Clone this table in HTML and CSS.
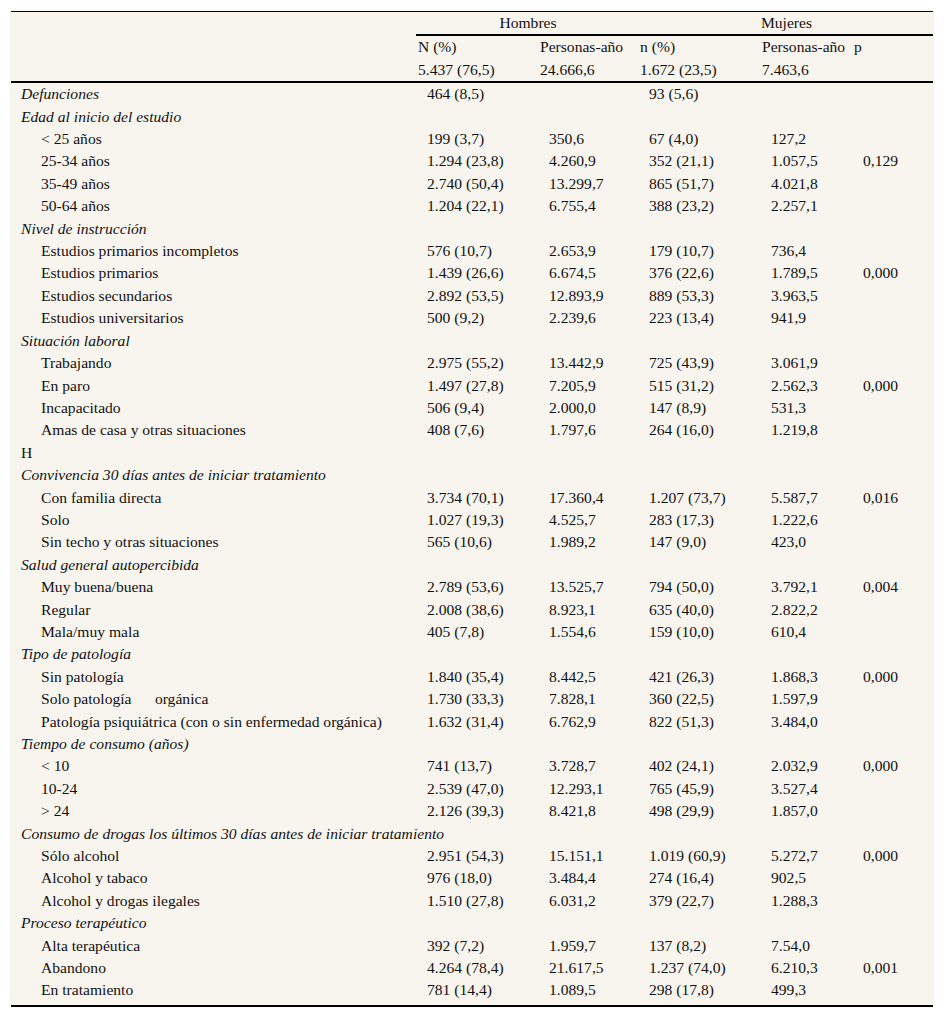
FILE: index.html
```html
<!DOCTYPE html>
<html lang="es">
<head>
<meta charset="utf-8">
<title>Tabla</title>
<link rel="stylesheet" href="styles.css">
</head>
<body>
<div class="wrap">
<div class="panel">
<table class="tbl">
<colgroup>
<col class="c1"><col class="c2"><col class="c3"><col class="c4"><col class="c5"><col class="c6">
</colgroup>
<thead>
<tr class="h1">
<th class="blank"></th>
<th class="grp" colspan="2">Hombres</th>
<th class="grp" colspan="3">Mujeres</th>
</tr>
<tr>
<th class="blank"></th>
<th>N (%)</th><th>Personas-año</th><th>n (%)</th><th>Personas-año</th><th>p</th>
</tr>
<tr class="h3">
<th class="blank"></th>
<th>5.437 (76,5)</th><th>24.666,6</th><th>1.672 (23,5)</th><th>7.463,6</th><th></th>
</tr>
</thead>
<tbody>
<tr><td class="cat">Defunciones</td><td>464 (8,5)</td><td></td><td>93 (5,6)</td><td></td><td></td></tr>
<tr><td class="cat">Edad al inicio del estudio</td><td></td><td></td><td></td><td></td><td></td></tr>
<tr><td class="sub">&lt; 25 años</td><td>199 (3,7)</td><td>350,6</td><td>67 (4,0)</td><td>127,2</td><td></td></tr>
<tr><td class="sub">25-34 años</td><td>1.294 (23,8)</td><td>4.260,9</td><td>352 (21,1)</td><td>1.057,5</td><td>0,129</td></tr>
<tr><td class="sub">35-49 años</td><td>2.740 (50,4)</td><td>13.299,7</td><td>865 (51,7)</td><td>4.021,8</td><td></td></tr>
<tr><td class="sub">50-64 años</td><td>1.204 (22,1)</td><td>6.755,4</td><td>388 (23,2)</td><td>2.257,1</td><td></td></tr>
<tr><td class="cat">Nivel de instrucción</td><td></td><td></td><td></td><td></td><td></td></tr>
<tr><td class="sub">Estudios primarios incompletos</td><td>576 (10,7)</td><td>2.653,9</td><td>179 (10,7)</td><td>736,4</td><td></td></tr>
<tr><td class="sub">Estudios primarios</td><td>1.439 (26,6)</td><td>6.674,5</td><td>376 (22,6)</td><td>1.789,5</td><td>0,000</td></tr>
<tr><td class="sub">Estudios secundarios</td><td>2.892 (53,5)</td><td>12.893,9</td><td>889 (53,3)</td><td>3.963,5</td><td></td></tr>
<tr><td class="sub">Estudios universitarios</td><td>500 (9,2)</td><td>2.239,6</td><td>223 (13,4)</td><td>941,9</td><td></td></tr>
<tr><td class="cat">Situación laboral</td><td></td><td></td><td></td><td></td><td></td></tr>
<tr><td class="sub">Trabajando</td><td>2.975 (55,2)</td><td>13.442,9</td><td>725 (43,9)</td><td>3.061,9</td><td></td></tr>
<tr><td class="sub">En paro</td><td>1.497 (27,8)</td><td>7.205,9</td><td>515 (31,2)</td><td>2.562,3</td><td>0,000</td></tr>
<tr><td class="sub">Incapacitado</td><td>506 (9,4)</td><td>2.000,0</td><td>147 (8,9)</td><td>531,3</td><td></td></tr>
<tr><td class="sub">Amas de casa y otras situaciones</td><td>408 (7,6)</td><td>1.797,6</td><td>264 (16,0)</td><td>1.219,8</td><td></td></tr>
<tr><td class="lab">H</td><td></td><td></td><td></td><td></td><td></td></tr>
<tr><td class="cat">Convivencia 30 días antes de iniciar tratamiento</td><td></td><td></td><td></td><td></td><td></td></tr>
<tr><td class="sub">Con familia directa</td><td>3.734 (70,1)</td><td>17.360,4</td><td>1.207 (73,7)</td><td>5.587,7</td><td>0,016</td></tr>
<tr><td class="sub">Solo</td><td>1.027 (19,3)</td><td>4.525,7</td><td>283 (17,3)</td><td>1.222,6</td><td></td></tr>
<tr><td class="sub">Sin techo y otras situaciones</td><td>565 (10,6)</td><td>1.989,2</td><td>147 (9,0)</td><td>423,0</td><td></td></tr>
<tr><td class="cat">Salud general autopercibida</td><td></td><td></td><td></td><td></td><td></td></tr>
<tr><td class="sub">Muy buena/buena</td><td>2.789 (53,6)</td><td>13.525,7</td><td>794 (50,0)</td><td>3.792,1</td><td>0,004</td></tr>
<tr><td class="sub">Regular</td><td>2.008 (38,6)</td><td>8.923,1</td><td>635 (40,0)</td><td>2.822,2</td><td></td></tr>
<tr><td class="sub">Mala/muy mala</td><td>405 (7,8)</td><td>1.554,6</td><td>159 (10,0)</td><td>610,4</td><td></td></tr>
<tr><td class="cat">Tipo de patología</td><td></td><td></td><td></td><td></td><td></td></tr>
<tr><td class="sub">Sin patología</td><td>1.840 (35,4)</td><td>8.442,5</td><td>421 (26,3)</td><td>1.868,3</td><td>0,000</td></tr>
<tr><td class="sub pre">Solo patología      orgánica</td><td>1.730 (33,3)</td><td>7.828,1</td><td>360 (22,5)</td><td>1.597,9</td><td></td></tr>
<tr><td class="sub">Patología psiquiátrica (con o sin enfermedad orgánica)</td><td>1.632 (31,4)</td><td>6.762,9</td><td>822 (51,3)</td><td>3.484,0</td><td></td></tr>
<tr><td class="cat">Tiempo de consumo (años)</td><td></td><td></td><td></td><td></td><td></td></tr>
<tr><td class="sub">&lt; 10</td><td>741 (13,7)</td><td>3.728,7</td><td>402 (24,1)</td><td>2.032,9</td><td>0,000</td></tr>
<tr><td class="sub">10-24</td><td>2.539 (47,0)</td><td>12.293,1</td><td>765 (45,9)</td><td>3.527,4</td><td></td></tr>
<tr><td class="sub">&gt; 24</td><td>2.126 (39,3)</td><td>8.421,8</td><td>498 (29,9)</td><td>1.857,0</td><td></td></tr>
<tr><td class="cat">Consumo de drogas los últimos 30 días antes de iniciar tratamiento</td><td></td><td></td><td></td><td></td><td></td></tr>
<tr><td class="sub">Sólo alcohol</td><td>2.951 (54,3)</td><td>15.151,1</td><td>1.019 (60,9)</td><td>5.272,7</td><td>0,000</td></tr>
<tr><td class="sub">Alcohol y tabaco</td><td>976 (18,0)</td><td>3.484,4</td><td>274 (16,4)</td><td>902,5</td><td></td></tr>
<tr><td class="sub">Alcohol y drogas ilegales</td><td>1.510 (27,8)</td><td>6.031,2</td><td>379 (22,7)</td><td>1.288,3</td><td></td></tr>
<tr><td class="cat">Proceso terapéutico</td><td></td><td></td><td></td><td></td><td></td></tr>
<tr><td class="sub">Alta terapéutica</td><td>392 (7,2)</td><td>1.959,7</td><td>137 (8,2)</td><td>7.54,0</td><td></td></tr>
<tr><td class="sub">Abandono</td><td>4.264 (78,4)</td><td>21.617,5</td><td>1.237 (74,0)</td><td>6.210,3</td><td>0,001</td></tr>
<tr class="last"><td class="sub">En tratamiento</td><td>781 (14,4)</td><td>1.089,5</td><td>298 (17,8)</td><td>499,3</td><td></td></tr>
</tbody>
</table>
</div>
</div>
</body>
</html>
```

FILE: styles.css
```css
html, body {
  margin: 0;
  padding: 0;
  background: #ffffff;
}

.wrap {
  padding: 10px 10px 10px 10px;
  width: 924px;
}

.panel {
  background: #f8f5ef;
  padding: 1px 1px 0 1px;
}

.tbl {
  width: 922px;
  border-collapse: collapse;
  table-layout: fixed;
  font-family: "Liberation Serif", "Times New Roman", serif;
  font-size: 15.6px;
  color: #111;
  border-top: 1px solid #000;
  border-bottom: 2px solid #000;
}

.c1 { width: 405px; }
.c2 { width: 122px; }
.c3 { width: 100px; }
.c4 { width: 122px; }
.c5 { width: 92px; }
.c6 { width: 81px; }

.tbl th {
  font-weight: normal;
  text-align: left;
  padding: 0 0 0 2px;
  height: 22.4px;
  line-height: 22.4px;
  white-space: nowrap;
  vertical-align: middle;
}

.tbl th.grp {
  text-align: center;
  border-bottom: 2px solid #000;
}

.tbl tr.h3 th {
  border-bottom: 2px solid #000;
}

.tbl td {
  padding: 0 0 0 11px;
  height: 22.4px;
  line-height: 22.4px;
  white-space: nowrap;
  vertical-align: middle;
}

.tbl td.cat {
  font-style: italic;
  padding-left: 10px;
}

.tbl td.lab {
  padding-left: 10px;
}

.tbl td.sub {
  padding-left: 30px;
}

.tbl td.pre {
  white-space: pre;
}

.tbl tr.last td {
  padding-bottom: 3px;
}
```
